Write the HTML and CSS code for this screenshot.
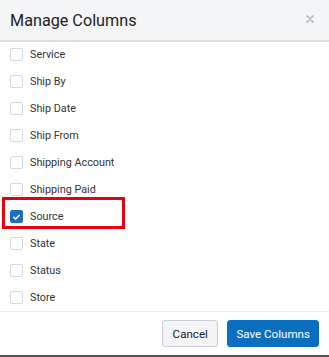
FILE: index.html
```html
<!DOCTYPE html>
<html>
<head>
<meta charset="utf-8">
<link rel="stylesheet" href="styles.css">
</head>
<body>
<div class="modal">
  <div class="header">
    <span class="title">Manage Columns</span>
    <svg class="close" viewBox="0 0 8 8" width="8" height="8"><path d="M1 1 L7 7 M7 1 L1 7" stroke="#bfc4c9" stroke-width="1.8" stroke-linecap="round"/></svg>
  </div>
  <ul class="list">
    <li class="row"><span class="box"></span><span>Service</span></li>
    <li class="row"><span class="box"></span><span>Ship By</span></li>
    <li class="row"><span class="box"></span><span>Ship Date</span></li>
    <li class="row"><span class="box"></span><span>Ship From</span></li>
    <li class="row"><span class="box"></span><span>Shipping Account</span></li>
    <li class="row"><span class="box"></span><span>Shipping Paid</span></li>
    <li class="row"><span class="box checked"><svg viewBox="0 0 12 12" width="12" height="12"><path d="M3 6.3 L5 8.2 L9 4" fill="none" stroke="#fff" stroke-width="1.6" stroke-linecap="round" stroke-linejoin="round"/></svg></span><span>Source</span></li>
    <li class="row"><span class="box"></span><span>State</span></li>
    <li class="row"><span class="box"></span><span>Status</span></li>
    <li class="row"><span class="box"></span><span>Store</span></li>
  </ul>
  <div class="footer">
    <button class="btn cancel">Cancel</button>
    <button class="btn save">Save Columns</button>
  </div>
  <div class="highlight"></div>
</div>
<div class="backdrop"></div>
</body>
</html>
```
FILE: styles.css
```css
html, body {
  margin: 0;
  padding: 0;
  background: #fff;
  font-family: Roboto, "Liberation Sans", sans-serif;
  overflow: hidden;
}
.modal {
  position: relative;
  width: 329px;
  height: 355px;
  background: #fff;
  display: flex;
  flex-direction: column;
}
.header {
  height: 40px;
  flex: none;
  background: #f4f5f6;
  border-bottom: 2px solid #dcdee0;
  display: flex;
  align-items: center;
  justify-content: space-between;
  padding: 0 15px 0 10px;
}
.title {
  font-size: 16.2px;
  color: #222;
}
.close {
  display: block;
  margin-top: -2px;
}
.list {
  list-style: none;
  margin: -1px 0 0 0;
  padding: 0;
  flex: 1;
}
.row {
  height: 27px;
  display: flex;
  align-items: center;
  padding-left: 10px;
  gap: 7px;
  font-size: 10.8px;
  color: #333;
}
.box {
  width: 11px;
  height: 11px;
  border: 1px solid #d4d7db;
  border-radius: 2px;
  background: #fff;
  display: flex;
  align-items: center;
  justify-content: center;
}
.box.checked {
  background: #1b6fc2;
  border-color: #1b6fc2;
}
.footer {
  height: 43px;
  flex: none;
  border-top: 1px solid #eceeef;
  display: flex;
  align-items: center;
  justify-content: flex-end;
  gap: 9px;
  padding-right: 10px;
}
.btn {
  height: 27px;
  border-radius: 3px;
  font-family: Roboto, "Liberation Sans", sans-serif;
  font-size: 11.6px;
  padding: 0 8px;
}
.cancel {
  background: #f3f4f6;
  border: 1px solid #c9cdd2;
  color: #222;
  padding: 0 9.5px;
}
.save {
  background: #0b6fbf;
  border: 1px solid #0b6fbf;
  color: #fff;
}
.highlight {
  position: absolute;
  left: 2px;
  top: 197px;
  width: 117px;
  height: 26px;
  border: 3px solid #e8000b;
}
.backdrop {
  height: 2px;
  background: #555;
}
```
